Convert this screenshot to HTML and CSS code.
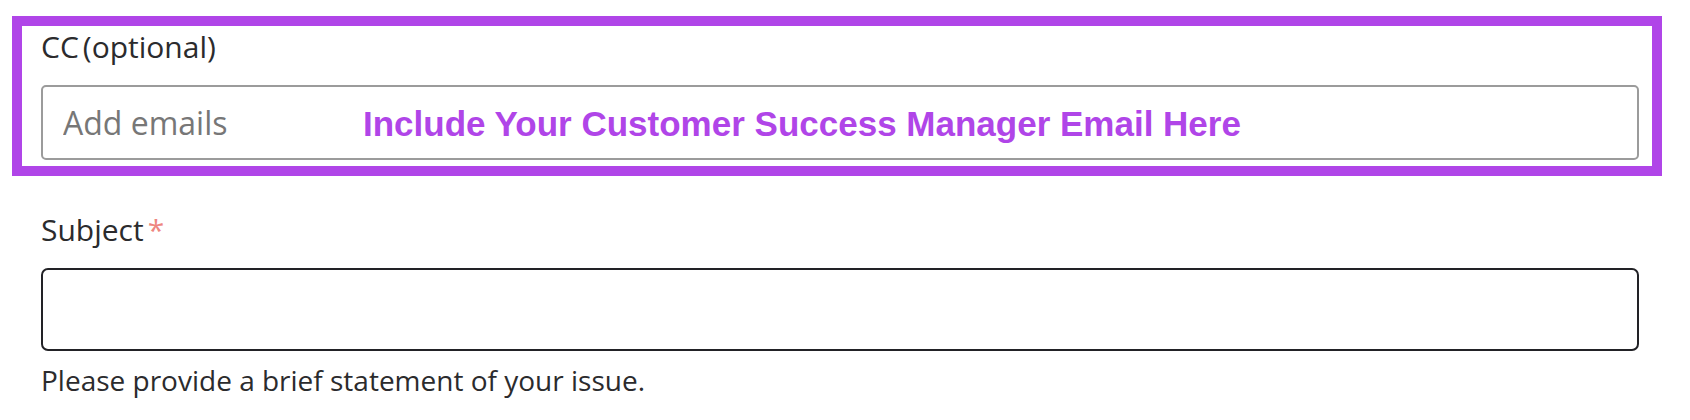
FILE: index.html
```html
<!DOCTYPE html>
<html lang="en">
<head>
<meta charset="utf-8">
<title>Support request</title>
<link rel="stylesheet" href="styles.css">
</head>
<body>
<form class="form">
  <div class="highlight">
    <div class="field">
      <label class="label" for="cc">CC<span class="optional">(optional)</span></label>
      <div class="cc-wrap">
        <input id="cc" class="input input-cc" type="text" placeholder="Add emails">
        <span class="annotation">Include Your Customer Success Manager Email Here</span>
      </div>
    </div>
  </div>
  <div class="field field-subject">
    <label class="label" for="subject">Subject<span class="req">*</span></label>
    <input id="subject" class="input input-subject" type="text">
    <p class="hint">Please provide a brief statement of your issue.</p>
  </div>
</form>
</body>
</html>
```

FILE: styles.css
```css
html, body {
  margin: 0;
  padding: 0;
  background: #ffffff;
}

body {
  font-family: "Open Sans", "Noto Sans", sans-serif;
  color: #2b2b2d;
}

.form {
  padding-top: 16px;
}

.highlight {
  margin-left: 12px;
  width: 1650px;
  height: 160px;
  box-sizing: border-box;
  border: 10px solid #b045e8;
  padding: 1px 13px 0 19px;
}

.field {
  display: flex;
  flex-direction: column;
  width: 1598px;
}

.field-subject {
  margin-left: 41px;
  margin-top: 34px;
}

.label {
  font-size: 30px;
  line-height: 40px;
  margin-bottom: 18px;
  color: #2b2b2d;
}

.optional {
  margin-left: 4px;
}

.req {
  color: #ee8680;
  margin-left: 4px;
}

.cc-wrap {
  position: relative;
}

.input {
  display: block;
  box-sizing: border-box;
  width: 1598px;
  margin: 0;
  font-family: "Open Sans", "Noto Sans", sans-serif;
  font-size: 32px;
  color: #2b2b2d;
  background: #ffffff;
  outline: none;
}

.input-cc {
  height: 75px;
  border: 2px solid #9b9b9b;
  border-radius: 5px;
  padding: 0 20px;
}

.input-cc::placeholder {
  color: #777777;
  opacity: 1;
}

.input-subject {
  height: 83px;
  border: 2px solid #222226;
  border-radius: 7px;
  padding: 0 20px;
}

.annotation {
  position: absolute;
  left: 322px;
  top: 20px;
  font-family: "Liberation Sans", Arial, sans-serif;
  font-weight: bold;
  font-size: 35px;
  line-height: 38px;
  color: #b045e8;
  white-space: nowrap;
  pointer-events: none;
}

.hint {
  margin: 10px 0 0 0;
  font-size: 28px;
  line-height: 38px;
  color: #2b2b2d;
}
```
